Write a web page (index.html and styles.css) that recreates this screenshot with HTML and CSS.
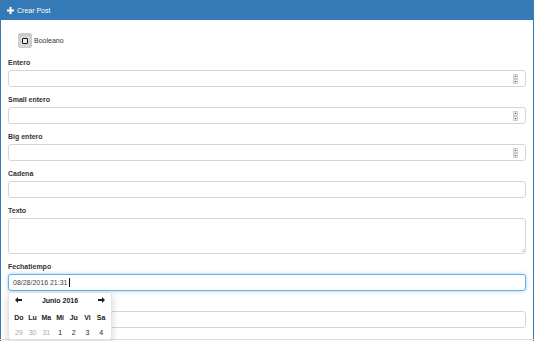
FILE: index.html
```html
<!DOCTYPE html>
<html lang="es">
<head>
  <meta charset="UTF-8">
  <title>Crear Post</title>
  <link rel="stylesheet" href="styles.css">
</head>
<body>

  <div class="panel">
    <div class="panel-heading">
      <svg class="icon-plus" width="7" height="7" viewBox="0 0 7 7"><path d="M2.5 0h2v2.5H7v2H4.5V7h-2V4.5H0v-2h2.5z" fill="#fff"/></svg>
      Crear Post
    </div>

    <div class="panel-body">
      <div class="check-row">
        <span class="check-btn"><span class="check-box"></span></span>
        <span class="check-label">Booleano</span>
      </div>

      <div class="form-group">
        <label>Entero</label>
        <div class="field">
          <input class="form-control" type="text">
          <svg class="spin" width="5" height="10" viewBox="0 0 5 10"><rect x="0.5" y="0.5" width="4" height="4" fill="#f2f2f2" stroke="#ccc"/><rect x="0.5" y="5.5" width="4" height="4" fill="#f2f2f2" stroke="#ccc"/><path d="M1.5 3h2l-1-1.5z M1.5 7h2l-1 1.5z" fill="#444"/></svg>
        </div>
      </div>

      <div class="form-group">
        <label>Small entero</label>
        <div class="field">
          <input class="form-control" type="text">
          <svg class="spin" width="5" height="10" viewBox="0 0 5 10"><rect x="0.5" y="0.5" width="4" height="4" fill="#f2f2f2" stroke="#ccc"/><rect x="0.5" y="5.5" width="4" height="4" fill="#f2f2f2" stroke="#ccc"/><path d="M1.5 3h2l-1-1.5z M1.5 7h2l-1 1.5z" fill="#444"/></svg>
        </div>
      </div>

      <div class="form-group">
        <label>Big entero</label>
        <div class="field">
          <input class="form-control" type="text">
          <svg class="spin" width="5" height="10" viewBox="0 0 5 10"><rect x="0.5" y="0.5" width="4" height="4" fill="#f2f2f2" stroke="#ccc"/><rect x="0.5" y="5.5" width="4" height="4" fill="#f2f2f2" stroke="#ccc"/><path d="M1.5 3h2l-1-1.5z M1.5 7h2l-1 1.5z" fill="#444"/></svg>
        </div>
      </div>

      <div class="form-group">
        <label>Cadena</label>
        <input class="form-control" type="text">
      </div>

      <div class="form-group">
        <label>Texto</label>
        <div class="field">
          <textarea class="form-control area"></textarea>
          <svg class="grip" width="5" height="5" viewBox="0 0 5 5"><path d="M4 1v1M2 3v1M4 3v1M3 2v1" stroke="#bbb" stroke-width="1"/></svg>
        </div>
      </div>

      <div class="form-group dt-group">
        <label>Fechatiempo</label>
        <div class="form-control focused">08/28/2016 21:31<span class="caret-line"></span></div>

        <!-- datepicker dropdown -->
        <div class="datepicker">
          <table>
            <tr class="dp-head">
              <td><svg width="7" height="6" viewBox="0 0 7 6"><path d="M0 3L3 0v2h4v2H3v2z" fill="#222"/></svg></td>
              <td colspan="5" class="dp-title">Junio 2016</td>
              <td><svg width="7" height="6" viewBox="0 0 7 6"><path d="M7 3L4 0v2H0v2h4v2z" fill="#222"/></svg></td>
            </tr>
            <tr class="dp-days">
              <th>Do</th><th>Lu</th><th>Ma</th><th>Mi</th><th>Ju</th><th>Vi</th><th>Sa</th>
            </tr>
            <tr class="dp-dates">
              <td class="old">29</td><td class="old">30</td><td class="old">31</td><td>1</td><td>2</td><td>3</td><td>4</td>
            </tr>
          </table>
        </div>
      </div>

      <div class="form-group">
        <label>Fecha</label>
        <input class="form-control" type="text">
      </div>
    </div>

    <div class="panel-footer"></div>
  </div>

</body>
</html>
```

FILE: styles.css
```css
* { box-sizing: border-box; }
body {
  margin: 0;
  background: #fff;
  color: #333;
  font-family: "Liberation Sans", Arial, sans-serif;
  font-size: 7px;
  overflow: hidden;
}
.panel {
  width: 534px;
  border: 1px solid #337ab7;
  border-top: none;
  border-bottom: none;
  height: 341px;
}
.panel-heading {
  background: #337ab7;
  color: #fff;
  height: 20px;
  padding: 0 7px;
  display: flex;
  align-items: center;
  gap: 3px;
  font-size: 7px;
  margin: 0 -1px;
}
.panel-body {
  padding: 8px 7px 4px;
}
.check-row {
  display: flex;
  align-items: center;
  gap: 2px;
  padding-left: 10px;
  margin: 5px 0 9px;
  height: 15px;
}
.check-btn {
  width: 14px;
  height: 15px;
  background: #d9d9d9;
  border: 1px solid #ccc;
  border-radius: 2px;
  box-shadow: inset 0 1px 3px rgba(0,0,0,.12);
  display: flex;
  align-items: center;
  justify-content: center;
}
.check-box {
  width: 6px;
  height: 6px;
  border: 1.5px solid #111;
  border-radius: 1px;
  background: #eee;
}
.check-label {
  color: #333;
}
.form-group {
  margin-bottom: 7px;
}
.form-group label {
  display: block;
  font-weight: bold;
  line-height: 10px;
  padding-top: 1px;
  margin-bottom: 2px;
}
.form-control {
  display: block;
  width: 100%;
  height: 17px;
  margin: 0;
  padding: 0 4px;
  border: 1px solid #d5d5d5;
  border-radius: 3px;
  background: #fff;
  font-family: inherit;
  font-size: 7px;
  color: #555;
  outline: none;
}
.area {
  height: 36px;
  resize: none;
}
.field {
  position: relative;
}
.spin {
  position: absolute;
  right: 8px;
  top: 4px;
}
.grip {
  position: absolute;
  right: 1px;
  bottom: 1px;
}
.focused {
  border-color: #66afe9;
  box-shadow: 0 0 4px rgba(102,175,233,.6);
  display: flex;
  align-items: center;
  color: #444;
}
.caret-line {
  display: inline-block;
  width: 1px;
  height: 9px;
  background: #000;
  margin-left: 1px;
}
.dt-group {
  position: relative;
}
.datepicker {
  position: absolute;
  left: 0;
  top: 31px;
  width: 104px;
  background: #fff;
  border: 1px solid #e3e3e3;
  border-radius: 3px;
  box-shadow: 0 3px 8px rgba(0,0,0,.18);
  padding: 1px 3px 2px;
  z-index: 5;
}
.datepicker table {
  border-collapse: collapse;
  width: 100%;
}
.datepicker td, .datepicker th {
  text-align: center;
  padding: 0;
  width: 14px;
  font-size: 7px;
}
.dp-head td {
  height: 13px;
  font-weight: bold;
  color: #222;
}
.dp-title {
  font-weight: bold;
}
.dp-days th {
  height: 20px;
  font-weight: bold;
  color: #222;
}
.dp-dates td {
  height: 10px;
  color: #222;
}
.dp-dates td.old {
  color: #aaa;
}
.panel-footer {
  border-top: 1px solid #ddd;
  margin: 0 -1px;
}
```
